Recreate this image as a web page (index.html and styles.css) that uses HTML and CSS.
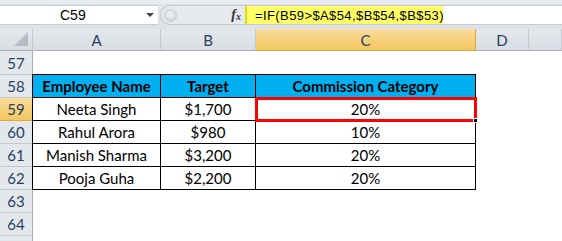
FILE: index.html
```html
<!DOCTYPE html>
<html>
<head>
<meta charset="utf-8">
<link rel="stylesheet" href="styles.css">
</head>
<body>
<div class="fbar">
  <div class="namebox"><span class="nb-text">C59</span><span class="nb-arrow"></span></div>
  <div class="ctrl"><span class="knob"></span><span class="fx">f<sub>x</sub></span></div>
  <div class="formula"><span class="fhl">=IF(B59&gt;$A$54,$B$54,$B$53)</span></div>
</div>
<div class="sheet">
  <div class="ch corner"><span class="tri"></span></div>
  <div class="ch">A</div>
  <div class="ch">B</div>
  <div class="ch sel">C</div>
  <div class="ch">D</div>
  <div class="ch"></div>

  <div class="rh">57</div><div class="c"></div><div class="c"></div><div class="c"></div><div class="c"></div><div class="c"></div>

  <div class="rh">58</div>
  <div class="c t th tl">Employee Name</div>
  <div class="c t th">Target</div>
  <div class="c t th">Commission Category</div>
  <div class="c"></div><div class="c"></div>

  <div class="rh sel">59</div>
  <div class="c t tl">Neeta Singh</div>
  <div class="c t">$1,700</div>
  <div class="c t active">20%<span class="handle"></span></div>
  <div class="c"></div><div class="c"></div>

  <div class="rh">60</div>
  <div class="c t tl">Rahul Arora</div>
  <div class="c t">$980</div>
  <div class="c t">10%</div>
  <div class="c"></div><div class="c"></div>

  <div class="rh">61</div>
  <div class="c t tl">Manish Sharma</div>
  <div class="c t">$3,200</div>
  <div class="c t">20%</div>
  <div class="c"></div><div class="c"></div>

  <div class="rh">62</div>
  <div class="c t tl">Pooja Guha</div>
  <div class="c t">$2,200</div>
  <div class="c t">20%</div>
  <div class="c"></div><div class="c"></div>

  <div class="rh">63</div><div class="c"></div><div class="c"></div><div class="c"></div><div class="c"></div><div class="c"></div>
  <div class="rh">64</div><div class="c"></div><div class="c"></div><div class="c"></div><div class="c"></div><div class="c"></div>
  <div class="rh"></div><div class="c"></div><div class="c"></div><div class="c"></div><div class="c"></div><div class="c"></div>
</div>
</body>
</html>
```
FILE: styles.css
```css
* { box-sizing: border-box; }
html, body { margin: 0; padding: 0; }
body {
  width: 562px;
  height: 241px;
  overflow: hidden;
  background: #fff;
  font-family: "Lato", "Open Sans", sans-serif;
}
.fbar {
  height: 29px;
  background: #dfe3e8;
  border-top: 4px solid #e8ebef;
  display: flex;
  align-items: flex-start;
  padding-top: 1px;
}
.namebox {
  width: 158px;
  height: 20px;
  background: #fff;
  border-top: 1px solid #c7ccd3;
  border-bottom: 1px solid #c7ccd3;
  display: flex;
  align-items: center;
  font-family: "Liberation Sans", Arial, sans-serif;
  font-size: 14px;
  color: #000;
}
.nb-text { margin-left: 60px; }
.nb-arrow {
  margin-left: auto;
  margin-right: 4px;
  width: 0; height: 0;
  border-left: 4px solid transparent;
  border-right: 4px solid transparent;
  border-top: 4px solid #444;
}
.ctrl {
  width: 85px;
  height: 20px;
  margin-left: 2px;
  background: #e6e9ed;
  border: 1px solid #c3c8cf;
  border-right: none;
  border-radius: 10px 0 0 10px;
  display: flex;
  align-items: center;
  padding-left: 3px;
}
.knob {
  width: 13px; height: 13px;
  border-radius: 50%;
  background: radial-gradient(circle at 45% 40%, #f2f4f6 0%, #d3d7dc 70%, #bcc1c8 100%);
  border: 1px solid #c9cdd3;
}
.fx {
  margin-left: auto;
  margin-right: 4px;
  font-family: "Liberation Serif", "Times New Roman", serif;
  font-style: italic;
  font-weight: bold;
  font-size: 14px;
  color: #333;
  line-height: 1;
}
.fx sub { font-size: 10px; vertical-align: -1px; }
.formula {
  flex: 1;
  height: 20px;
  background: #fff;
  border-top: 1px solid #c7ccd3;
  border-bottom: 1px solid #c7ccd3;
  display: flex;
}
.fhl {
  background: #ffff66;
  border-left: 2px solid #e0e000;
  width: 198px;
  padding-left: 8px;
  font-family: "Liberation Sans", Arial, sans-serif;
  font-size: 13px;
  letter-spacing: 0.4px;
  line-height: 19px;
  color: #000;
  white-space: nowrap;
}
.sheet {
  display: grid;
  grid-template-columns: 33px 128px 95px 220px 53px 1fr;
  grid-template-rows: 22px 24px repeat(8, 23px);
}
.ch {
  background: linear-gradient(#e4e7ec, #dadee4);
  border-right: 1px solid #c3c9d1;
  border-bottom: 1px solid #a9aeb6;
  color: #27415f;
  font-size: 15px;
  display: flex;
  align-items: center;
  justify-content: center;
  padding-top: 1px;
}
.ch.sel {
  background: linear-gradient(#f9dd9d, #f3c75e);
  border-right: 1px solid #e2a63a;
  border-bottom: 1px solid #e2a63a;
}
.corner { position: relative; }
.tri {
  position: absolute;
  right: 4px; bottom: 4px;
  width: 0; height: 0;
  border-left: 14px solid transparent;
  border-bottom: 14px solid #b7bcc3;
}
.rh {
  background: #e4e8ed;
  border-right: 1px solid #a9aeb6;
  border-bottom: 1px solid #c3c9d1;
  color: #27415f;
  font-size: 15px;
  display: flex;
  align-items: center;
  justify-content: center;
}
.rh.sel {
  background: linear-gradient(#f9dd9d, #f3c75e);
  border-bottom: 1px solid #e2a63a;
  border-right: 1px solid #e2a63a;
}
.c {
  font-size: 15px;
  color: #000;
  display: flex;
  align-items: center;
  justify-content: center;
}
.t {
  border-right: 1px solid #000;
  border-bottom: 1px solid #000;
}
.tl { border-left: 1px solid #000; margin-left: -1px; }
.th {
  background: #00b0f0;
  font-weight: bold;
  border-top: 1px solid #000;
  margin-top: -1px;
}
.active {
  position: relative;
  outline: 3px solid #ff0000;
  outline-offset: -2px;
}
.handle {
  position: absolute;
  right: -3px; bottom: -3px;
  width: 5px; height: 5px;
  background: #000;
  border: 1px solid #fff;
}
```
